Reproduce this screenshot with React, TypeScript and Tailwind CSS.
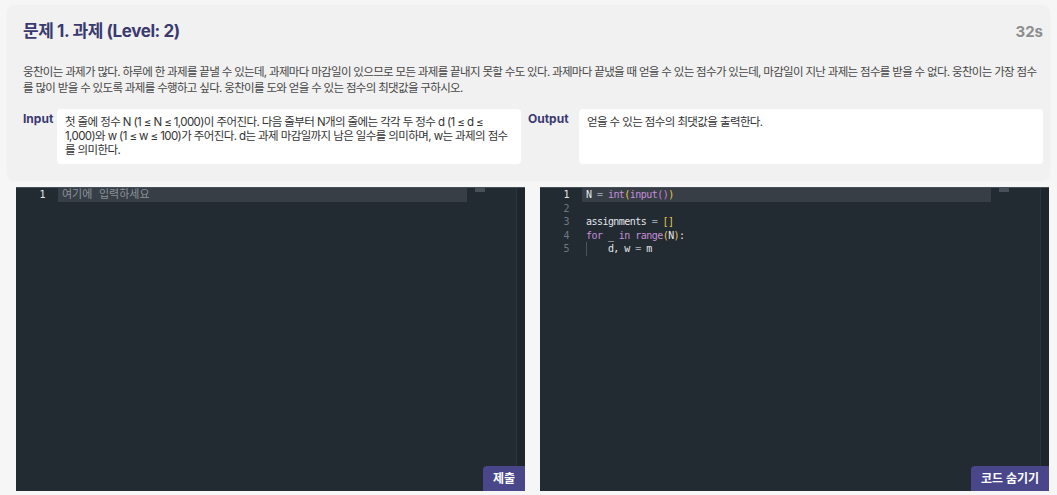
const uiFont = { fontFamily: 'Inter, "Noto Sans CJK KR", sans-serif' };
const codeFont = { fontFamily: '"DejaVu Sans Mono", "Noto Sans CJK KR", monospace' };

type Token = { t: string; c?: string };

const KW = 'text-[#c58fd6]';
const BR = 'text-[#e5c94a]';
const OP = 'text-[#9aa3ad]';

const pythonLines: Token[][] = [
  [{ t: 'N ' }, { t: '= ', c: OP }, { t: 'int', c: KW }, { t: '(', c: BR }, { t: 'input', c: KW }, { t: '()', c: 'text-[#d07fd8]' }, { t: ')', c: BR }],
  [],
  [{ t: 'assignments ' }, { t: '= ', c: OP }, { t: '[]', c: BR }],
  [{ t: 'for', c: KW }, { t: ' _ ' }, { t: 'in', c: KW }, { t: ' ' }, { t: 'range', c: KW }, { t: '(', c: BR }, { t: 'N' }, { t: ')', c: BR }, { t: ':' }],
  [{ t: '    d, w ' }, { t: '= ', c: OP }, { t: 'm' }],
];

function Editor({
  lines,
  placeholder,
  button,
}: {
  lines?: Token[][];
  placeholder?: string;
  button: string;
}) {
  const rows = lines ?? [[]];
  return (
    <div className="relative w-[509px] h-[304px] bg-[#222a32] border-t border-[#4a5058] overflow-hidden">
      {/* minimap marker */}
      <div className="absolute top-0 right-[40px] w-[10px] h-[4px] bg-[#59606a] opacity-70" />
      {/* scrollbar track */}
      <div className="absolute top-0 right-0 bottom-0 w-[9px] bg-[#1e252c] border-l border-[#2c343c]" />

      <div className="text-[10px] leading-[13.5px] tracking-[-0.55px]" style={codeFont}>
        {rows.map((line, i) => (
          <div key={i} className="flex h-[13.5px]">
            <div
              className={`w-[29px] text-right ${i === 0 ? 'text-[#e6e9ec]' : 'text-[#6f7780]'}`}
            >
              {i + 1}
            </div>
            <div
              className={`relative ml-[13px] pl-[4px] w-[409px] whitespace-pre text-[#e3e6ea] ${
                i === 0 ? 'bg-[#373e46]' : ''
              }`}
            >
              {placeholder && i === 0 ? (
                <span className="text-[#8b929b] tracking-normal text-[11px]">{placeholder}</span>
              ) : (
                line.map((tok, j) => (
                  <span key={j} className={tok.c}>
                    {tok.t}
                  </span>
                ))
              )}
              {i === 4 && (
                <span className="absolute left-[4px] top-0 bottom-0 w-px bg-[#4b535c]" />
              )}
            </div>
          </div>
        ))}
      </div>

      <button
        className="absolute right-0 bottom-0 h-[25px] px-[10px] bg-[#49478a] text-white text-[12px] font-bold rounded-tl-[4px]"
        style={uiFont}
      >
        {button}
      </button>
    </div>
  );
}

export default function App() {
  return (
    <div className="min-h-screen bg-[#f6f6f6] pt-[6px]" style={uiFont}>
      {/* Problem card */}
      <div className="mx-2 h-[174px] rounded-md bg-[#f1f1f1] shadow-[0_0_3px_rgba(0,0,0,0.06)] pl-[15px] pr-[6px] pt-[14px]">
        <div className="flex items-center justify-between h-6">
          <h1 className="text-[17px] font-bold text-[#3a3970] tracking-[-0.4px]">
            문제 1. 과제 (Level: 2)
          </h1>
          <span className="text-[15px] font-bold text-[#8d8d8d]">32s</span>
        </div>

        <p className="mt-[20px] text-[11.5px] leading-[16px] text-[#474747] tracking-[-0.68px]">
          웅찬이는 과제가 많다. 하루에 한 과제를 끝낼 수 있는데, 과제마다 마감일이 있으므로 모든 과제를 끝내지 못할 수도 있다. 과제마다 끝냈을 때 얻을 수 있는 점수가 있는데, 마감일이 지난 과제는 점수를 받을 수 없다. 웅찬이는 가장 점수를 많이 받을 수 있도록 과제를 수행하고 싶다. 웅찬이를 도와 얻을 수 있는 점수의 최댓값을 구하시오.
        </p>

        <div className="mt-[13px] flex gap-[7px]">
          <div className="flex w-[498px]">
            <div className="w-[34px] text-[12px] font-bold text-[#3a3970] pt-[1px]">Input</div>
            <div className="flex-1 h-[55px] rounded-[4px] bg-white px-2 py-[6px] text-[11.5px] leading-[14px] text-[#333] tracking-[-0.6px]">
              첫 줄에 정수 N (1 ≤ N ≤ 1,000)이 주어진다. 다음 줄부터 N개의 줄에는 각각 두 정수 d (1 ≤ d ≤ 1,000)와 w (1 ≤ w ≤ 100)가 주어진다. d는 과제 마감일까지 남은 일수를 의미하며, w는 과제의 점수를 의미한다.
            </div>
          </div>
          <div className="flex flex-1">
            <div className="w-[51px] text-[12px] font-bold text-[#3a3970] pt-[1px]">Output</div>
            <div className="flex-1 h-[55px] rounded-[4px] bg-white px-2 py-[6px] text-[11.5px] leading-[14px] text-[#333] tracking-[-0.6px]">
              얻을 수 있는 점수의 최댓값을 출력한다.
            </div>
          </div>
        </div>
      </div>

      {/* Editors */}
      <div className="mt-[7px] flex gap-[15px] pl-4 pr-[7px]">
        <Editor placeholder="여기에 입력하세요" button="제출" />
        <Editor lines={pythonLines} button="코드 숨기기" />
      </div>
    </div>
  );
}
